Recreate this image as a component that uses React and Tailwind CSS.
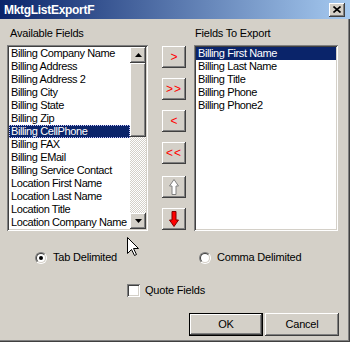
import React from "react";

const raised =
  "shadow-[inset_-1px_-1px_#404040,inset_1px_1px_#ffffff,inset_-2px_-2px_#808080,inset_2px_2px_#d4d0c8]";
const sunken =
  "shadow-[inset_1px_1px_#808080,inset_-1px_-1px_#ffffff,inset_2px_2px_#404040,inset_-2px_-2px_#d4d0c8]";

const available = [
  "Billing Company Name",
  "Billing Address",
  "Billing Address 2",
  "Billing City",
  "Billing State",
  "Billing Zip",
  "Billing CellPhone",
  "Billing FAX",
  "Billing EMail",
  "Billing Service Contact",
  "Location First Name",
  "Location Last Name",
  "Location Title",
  "Location Company Name",
];

const exported = [
  "Billing First Name",
  "Billing Last Name",
  "Billing Title",
  "Billing Phone",
  "Billing Phone2",
];

const Item = ({ text, selected, focus }) => (
  <div
    className={
      "h-[13px] leading-[13px] pl-[2px] whitespace-nowrap tracking-[-0.4px] " +
      (selected ? "bg-[#0a246a] text-white " : "") +
      (focus ? "outline outline-1 outline-dotted outline-[#c8c8ff] -outline-offset-1" : "")
    }
  >
    {text}
  </div>
);

const Tri = ({ up }) => (
  <svg width="7" height="4" viewBox="0 0 7 4">
    <polygon points={up ? "3.5,0 7,4 0,4" : "0,0 7,0 3.5,4"} fill="#000" />
  </svg>
);

const ScrollBtn = ({ up }) => (
  <div className={"h-[16px] bg-[#d4d0c8] flex items-center justify-center " + raised}>
    <Tri up={up} />
  </div>
);

const MoveBtn = ({ children, className = "" }) => (
  <div
    className={
      "w-[24px] h-[22px] bg-[#d4d0c8] flex items-center justify-center text-[#ff0000] text-[12px] leading-none " +
      raised +
      " " +
      className
    }
  >
    {children}
  </div>
);

const Radio = ({ checked }) => (
  <div className="w-[12px] h-[12px] rounded-full border border-t-[#808080] border-l-[#808080] border-b-white border-r-white">
    <div className="w-full h-full rounded-full bg-white border border-t-[#404040] border-l-[#404040] border-b-[#d4d0c8] border-r-[#d4d0c8] flex items-center justify-center">
      {checked && <div className="w-[4px] h-[4px] rounded-full bg-black" />}
    </div>
  </div>
);

export default function App() {
  return (
    <div className="relative w-[350px] h-[342px] bg-[#d4d0c8] flex flex-col overflow-hidden text-[11px] text-black tracking-[-0.2px] font-['Liberation_Sans',Arial,sans-serif] shadow-[inset_-1px_-1px_#404040,inset_-2px_-2px_#808080]">
      {/* title bar */}
      <div className="h-[19px] flex items-center justify-between pl-[4px] pr-[5px] bg-[linear-gradient(to_right,#0a246a,#a6caf0)]">
        <span className="text-white font-bold text-[12px] tracking-[-0.3px]">MktgListExportF</span>
        <div className={"w-[16px] h-[14px] bg-[#d4d0c8] flex items-center justify-center " + raised}>
          <svg width="8" height="7" viewBox="0 0 8 7">
            <path d="M0.5 0.5 L7.5 6.5 M7.5 0.5 L0.5 6.5" stroke="#000" strokeWidth="1.6" />
          </svg>
        </div>
      </div>

      <div className="flex px-[7px] pt-[8px]">
        {/* available */}
        <div className="w-[141px] flex flex-col">
          <div className="h-[13px] leading-[13px] pl-[3px]">Available Fields</div>
          <div className={"mt-[5px] h-[186px] p-[2px] bg-white flex " + sunken}>
            <div className="flex-1 flex flex-col overflow-hidden">
              {available.map((t) => (
                <Item key={t} text={t} selected={t === "Billing CellPhone"} focus={t === "Billing CellPhone"} />
              ))}
            </div>
            <div className="w-[16px] flex flex-col">
              <ScrollBtn up />
              <div className={"h-[74px] bg-[#d4d0c8] " + raised} />
              <div className="flex-1 bg-[image:repeating-conic-gradient(#ffffff_0%_25%,#d4d0c8_0%_50%)] bg-[length:2px_2px]" />
              <ScrollBtn />
            </div>
          </div>
        </div>

        {/* move buttons */}
        <div className="ml-[14px] w-[24px] flex flex-col pt-[19px]">
          <MoveBtn>&gt;</MoveBtn>
          <MoveBtn className="mt-[10px] tracking-[1px]">&gt;&gt;</MoveBtn>
          <MoveBtn className="mt-[10px]">&lt;</MoveBtn>
          <MoveBtn className="mt-[10px] tracking-[1px]">&lt;&lt;</MoveBtn>
          <MoveBtn className="mt-[12px]">
            <svg width="10" height="16" viewBox="0 0 10 16">
              <polygon points="5,0.5 9.5,7 7,7 7,15.5 3,15.5 3,7 0.5,7" fill="#ffffff" stroke="#808080" />
            </svg>
          </MoveBtn>
          <MoveBtn className="mt-[10px]">
            <svg width="10" height="16" viewBox="0 0 10 16">
              <polygon points="3,0.5 7,0.5 7,9 9.5,9 5,15.5 0.5,9 3,9" fill="#ff0000" stroke="#800000" />
            </svg>
          </MoveBtn>
        </div>

        {/* export */}
        <div className="ml-[8px] w-[144px] flex flex-col">
          <div className="h-[13px] leading-[13px] pl-[1px]">Fields To Export</div>
          <div className={"mt-[5px] h-[186px] p-[2px] bg-white flex flex-col " + sunken}>
            {exported.map((t, i) => (
              <Item key={t} text={t} selected={i === 0} />
            ))}
          </div>
        </div>
      </div>

      {/* delimiters */}
      <div className="mt-[20px] h-[13px] flex items-center">
        <div className="ml-[35px] w-[164px] flex items-center gap-[6px]">
          <Radio checked />
          <span>Tab Delimited</span>
        </div>
        <div className="flex items-center gap-[6px]">
          <Radio />
          <span>Comma Delimited</span>
        </div>
      </div>

      <div className="mt-[20px] h-[13px] flex items-center">
        <div className="ml-[127px] flex items-center gap-[5px]">
          <div className={"w-[13px] h-[13px] bg-white " + sunken} />
          <span>Quote Fields</span>
        </div>
      </div>

      <div className="mt-[16px] flex">
        <div className="ml-[189px] w-[74px] h-[23px] border border-black">
          <div className={"w-full h-full bg-[#d4d0c8] flex items-center justify-center " + raised}>OK</div>
        </div>
        <div className={"ml-[2px] w-[74px] h-[23px] bg-[#d4d0c8] flex items-center justify-center " + raised}>
          Cancel
        </div>
      </div>

      {/* mouse pointer */}
      <svg className="absolute left-[127px] top-[237px]" width="13" height="20" viewBox="0 0 13 20">
        <polygon
          points="0.5,0.5 0.5,16.5 4.5,12.5 7.5,18.5 9.5,17.5 6.5,11.5 11.5,11.5"
          fill="#ffffff"
          stroke="#000000"
          strokeWidth="1"
        />
      </svg>
    </div>
  );
}
